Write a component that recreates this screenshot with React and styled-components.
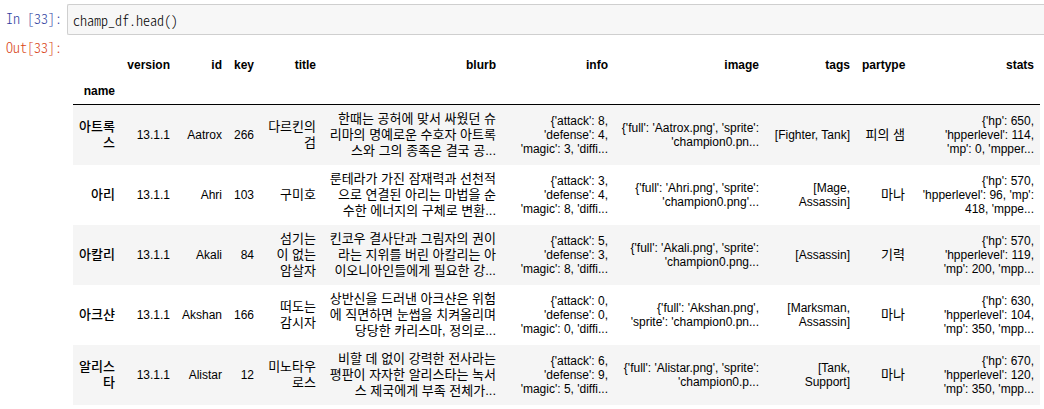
import styled, { createGlobalStyle } from "styled-components";

const columns = [
  { key: "name", width: 48 },
  { key: "version", width: 55 },
  { key: "id", width: 52 },
  { key: "key", width: 32 },
  { key: "title", width: 62, korean: true },
  { key: "blurb", width: 180, korean: true },
  { key: "info", width: 112 },
  { key: "image", width: 151 },
  { key: "tags", width: 91 },
  { key: "partype", width: 55, korean: true },
  { key: "stats", width: 129 },
];

const dataColumns = columns.slice(1);

const champions = [
  {
    name: "아트록스",
    version: "13.1.1",
    id: "Aatrox",
    key: "266",
    title: "다르킨의 검",
    blurb: "한때는 공허에 맞서 싸웠던 슈리마의 명예로운 수호자 아트록스와 그의 종족은 결국 공...",
    info: "{'attack': 8, 'defense': 4, 'magic': 3, 'diffi...",
    image: "{'full': 'Aatrox.png', 'sprite': 'champion0.pn...",
    tags: "[Fighter, Tank]",
    partype: "피의 샘",
    stats: "{'hp': 650,\n'hpperlevel': 114,\n'mp': 0, 'mpper...",
  },
  {
    name: "아리",
    version: "13.1.1",
    id: "Ahri",
    key: "103",
    title: "구미호",
    blurb: "룬테라가 가진 잠재력과 선천적으로 연결된 아리는 마법을 순수한 에너지의 구체로 변환...",
    info: "{'attack': 3, 'defense': 4, 'magic': 8, 'diffi...",
    image: "{'full': 'Ahri.png', 'sprite': 'champion0.png'...",
    tags: "[Mage, Assassin]",
    partype: "마나",
    stats: "{'hp': 570,\n'hpperlevel': 96, 'mp':\n418, 'mppe...",
  },
  {
    name: "아칼리",
    version: "13.1.1",
    id: "Akali",
    key: "84",
    title: "섬기는 이 없는 암살자",
    blurb: "킨코우 결사단과 그림자의 권이라는 지위를 버린 아칼리는 아이오니아인들에게 필요한 강...",
    info: "{'attack': 5, 'defense': 3, 'magic': 8, 'diffi...",
    image: "{'full': 'Akali.png', 'sprite': 'champion0.png...",
    tags: "[Assassin]",
    partype: "기력",
    stats: "{'hp': 570,\n'hpperlevel': 119,\n'mp': 200, 'mpp...",
  },
  {
    name: "아크샨",
    version: "13.1.1",
    id: "Akshan",
    key: "166",
    title: "떠도는 감시자",
    blurb: "상반신을 드러낸 아크샨은 위험에 직면하면 눈썹을 치켜올리며 당당한 카리스마, 정의로...",
    info: "{'attack': 0, 'defense': 0, 'magic': 0, 'diffi...",
    image: "{'full': 'Akshan.png', 'sprite': 'champion0.pn...",
    tags: "[Marksman, Assassin]",
    partype: "마나",
    stats: "{'hp': 630,\n'hpperlevel': 104,\n'mp': 350, 'mpp...",
  },
  {
    name: "알리스타",
    version: "13.1.1",
    id: "Alistar",
    key: "12",
    title: "미노타우로스",
    blurb: "비할 데 없이 강력한 전사라는 평판이 자자한 알리스타는 녹서스 제국에게 부족 전체가...",
    info: "{'attack': 6, 'defense': 9, 'magic': 5, 'diffi...",
    image: "{'full': 'Alistar.png', 'sprite': 'champion0.p...",
    tags: "[Tank, Support]",
    partype: "마나",
    stats: "{'hp': 670,\n'hpperlevel': 120,\n'mp': 350, 'mpp...",
  },
];

export default function App() {
  return (
    <>
      <GlobalStyle />
      <Notebook>
        <CellRow>
          <InPrompt htmlFor="cell-33">In [33]:</InPrompt>
          <CodeInput
            id="cell-33"
            type="text"
            spellCheck="false"
            defaultValue="champ_df.head()"
          />
        </CellRow>
        <CellRow>
          <OutPrompt as="div">Out[33]:</OutPrompt>
          <Output>
            <DataFrame>
              <colgroup>
                {columns.map((col) => (
                  <Column key={col.key} $width={col.width} />
                ))}
              </colgroup>
              <thead>
                <tr>
                  <HeadCell as="td" />
                  {dataColumns.map((col) => (
                    <HeadCell key={col.key} scope="col">
                      {col.key}
                    </HeadCell>
                  ))}
                </tr>
                <tr>
                  <HeadCell scope="col">name</HeadCell>
                  <HeadCell as="td" colSpan={dataColumns.length} />
                </tr>
              </thead>
              <tbody>
                {champions.map((champ) => (
                  <BodyRow key={champ.id}>
                    <IndexCell scope="row">{champ.name}</IndexCell>
                    {dataColumns.map((col) => (
                      <DataCell key={col.key} $korean={col.korean}>
                        {champ[col.key]}
                      </DataCell>
                    ))}
                  </BodyRow>
                ))}
              </tbody>
            </DataFrame>
          </Output>
        </CellRow>
      </Notebook>
    </>
  );
}

const GlobalStyle = createGlobalStyle`
  * {
    box-sizing: border-box;
  }

  body {
    margin: 0;
    background: #fff;
    color: #000;
    font-family: "Liberation Sans", "Noto Sans CJK KR", sans-serif;
  }
`;

const Notebook = styled.main`
  display: flex;
  flex-direction: column;
  padding-top: 4px;
`;

const CellRow = styled.div`
  display: flex;
  align-items: flex-start;
`;

const Prompt = styled.label`
  flex: 0 0 67px;
  padding-right: 5px;
  font-family: "Noto Sans CJK KR", monospace;
  font-feature-settings: "hwid";
  font-weight: 300;
  font-size: 14px;
  line-height: 17px;
  text-align: right;
  white-space: pre;
`;

const InPrompt = styled(Prompt)`
  padding-top: 6px;
  color: #303f9f;
`;

const OutPrompt = styled(Prompt)`
  padding-top: 4px;
  color: #d84315;
`;

const CodeInput = styled.input`
  flex: 1;
  min-width: 0;
  height: 31px;
  padding: 0 5px;
  border: 1px solid #cfcfcf;
  border-right: none;
  border-radius: 2px 0 0 2px;
  outline: none;
  background: #f7f7f7;
  color: #000;
  font-family: "Noto Sans CJK KR", monospace;
  font-feature-settings: "hwid";
  font-weight: 300;
  font-size: 14px;
`;

const Output = styled.div`
  flex: 1;
  min-width: 0;
  padding: 17px 4px 0 6px;
`;

const DataFrame = styled.table`
  width: 100%;
  table-layout: fixed;
  border-collapse: collapse;
  font-size: 12px;
  line-height: 14px;
  text-align: right;

  thead {
    border-bottom: 1px solid #000;
  }
`;

const Column = styled.col`
  width: ${({ $width }) => $width}px;
`;

const HeadCell = styled.th`
  height: 26px;
  padding: 6px;
  font-weight: 700;
  text-align: right;
  vertical-align: middle;
`;

const BodyRow = styled.tr`
  height: 60px;

  &:nth-child(odd) {
    background: #f5f5f5;
  }
`;

const DataCell = styled.td`
  padding: 6px;
  vertical-align: middle;
  white-space: pre-line;
  font-size: ${({ $korean }) => ($korean ? 13 : 12)}px;
  line-height: ${({ $korean }) => ($korean ? 16 : 14)}px;
`;

const IndexCell = styled.th`
  padding: 6px;
  vertical-align: middle;
  font-size: 13px;
  line-height: 16px;
  font-weight: 500;
  text-align: right;
`;
